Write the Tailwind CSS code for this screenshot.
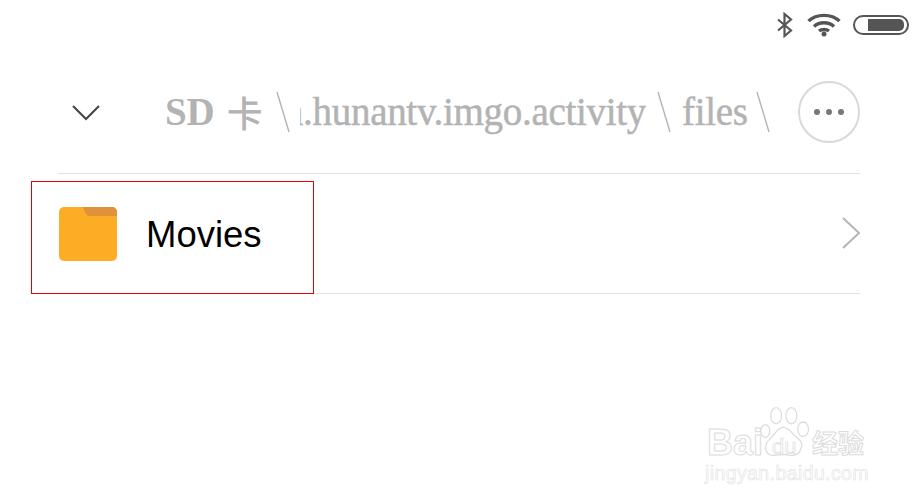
<!DOCTYPE html>
<html lang="zh">
<head>
<meta charset="utf-8">
<title>Movies</title>
<script src="https://cdn.jsdelivr.net/npm/@tailwindcss/browser@4"></script>
</head>
<body class="bg-white">
<div class="relative w-[920px] h-[504px] overflow-hidden bg-white font-['Liberation_Sans',sans-serif]">
  <!-- status bar -->
  <div class="h-[50px] flex items-start justify-end pt-[12px] pr-[11px]">
    <svg class="w-[18px] h-[26px] mr-[13px]" viewBox="0 0 18 26" fill="none" stroke="#555" stroke-width="2.2"><path d="M2 7.5 L15 18.5 L8.5 24 V2 L15 7.5 L2 18.5"/></svg>
    <svg class="w-[34px] h-[26px] mr-[12px]" viewBox="0 0 34 26" fill="none" stroke="#555" stroke-width="3.4"><path d="M1.500 9 C9.500 1.500 24.500 1.500 32.500 9"/><path d="M7 14.500 C12.500 9.500 21.500 9.500 27 14.500"/><path d="M12 19 C14.500 17 19.500 17 22 19"/><circle cx="17" cy="22" r="2.500" fill="#555" stroke="none"/></svg>
    <div class="mt-[3px] w-[56px] h-[20px] rounded-full border-2 border-[#555] pl-[13px] pr-[3px] py-[2px] flex">
      <div class="flex-1 bg-[#555] rounded-r-[5px]"></div>
    </div>
  </div>
  <!-- breadcrumb row -->
  <div class="ml-[58px] mr-[60px] h-[124px] border-b border-[#e3e3e3] flex items-center">
    <div class="w-[107px] pl-[14px] pt-[3px] shrink-0">
      <svg class="w-[28px] h-[18px] block" viewBox="0 0 28 18" fill="none" stroke="#444" stroke-width="2"><path d="M1 2 L14 15 L27 2"/></svg>
    </div>
    <div class="flex items-center text-[#b3b3b3] font-['Liberation_Serif','Noto_Sans_CJK_SC',serif] text-[39px] tracking-[-0.3px] h-[60px] pt-[1px]">
      <span class="w-[111px] shrink-0 flex items-center whitespace-nowrap font-bold">SD<span class="ml-[13px] font-['Noto_Sans_CJK_SC',serif] text-[35px] font-normal [-webkit-text-stroke:0.8px_#b3b3b3]">卡</span></span>
      <svg class="w-[14px] h-[42px] mr-[10px] shrink-0" viewBox="0 0 14 42" fill="none" stroke="#b3b3b3" stroke-width="1.4"><path d="M1 1 L13 41"/></svg>
      <div class="w-[346px] overflow-hidden flex justify-end shrink-0"><span class="whitespace-nowrap [-webkit-text-stroke:0.5px_#b3b3b3]">com.hunantv.imgo.activity</span></div>
      <svg class="w-[14px] h-[42px] ml-[11px] mr-[11px] shrink-0" viewBox="0 0 14 42" fill="none" stroke="#b3b3b3" stroke-width="1.4"><path d="M1 1 L13 41"/></svg>
      <span class="w-[62px] shrink-0 [-webkit-text-stroke:0.5px_#b3b3b3]">files</span>
      <svg class="w-[14px] h-[42px] ml-[12px] shrink-0" viewBox="0 0 14 42" fill="none" stroke="#b3b3b3" stroke-width="1.4"><path d="M1 1 L13 41"/></svg>
    </div>
    <div class="ml-auto mt-[1px] w-[62px] h-[62px] rounded-full border-2 border-[#d9d9d9] flex items-center justify-center gap-[6px] shrink-0">
      <span class="w-[6px] h-[6px] rounded-full bg-[#777]"></span>
      <span class="w-[6px] h-[6px] rounded-full bg-[#777]"></span>
      <span class="w-[6px] h-[6px] rounded-full bg-[#777]"></span>
    </div>
  </div>
  <!-- list row -->
  <div class="ml-[31px] mr-[60px] mt-[7px] h-[113px] flex items-stretch">
    <div class="w-[283px] h-[113px] border border-[#e60000] flex items-center pl-[27px] pb-[8px] shrink-0">
      <svg class="w-[58px] h-[54px] shrink-0" viewBox="0 0 58 54"><rect width="58" height="54" rx="5" fill="#fdac25"/><path d="M24 0 H53 A5 5 0 0 1 58 5 V9 H31 C28 9 27 7 26 5 Z" fill="#e0923a"/></svg>
      <span class="ml-[29px] mt-[4px] text-[36.5px] leading-none text-black">Movies</span>
    </div>
    <div class="flex-1 border-b border-[#e3e3e3] flex items-center justify-end pb-[8px]">
      <svg class="w-[18px] h-[32px]" viewBox="0 0 18 32" fill="none" stroke="#b5b5b5" stroke-width="2"><path d="M1 1 L17 16 L1 31"/></svg>
    </div>
  </div>
  <!-- watermark -->
  <div class="absolute left-[704px] top-[404px] w-[170px] h-[84px] text-white [-webkit-text-stroke:1px_#dcdcdc]">
    <span class="absolute left-[3px] top-[17px] text-[36px] leading-[44px] font-bold">Bai</span>
    <svg class="absolute left-[54px] top-0 w-[56px] h-[54px]" viewBox="0 0 62 60" fill="white" stroke="#dcdcdc" stroke-width="1.4"><ellipse cx="8" cy="30" rx="5" ry="7"/><ellipse cx="20" cy="13" rx="6" ry="9"/><ellipse cx="37" cy="13" rx="6" ry="9"/><ellipse cx="50" cy="28" rx="6" ry="8"/><path d="M28 26 C35 26 38 34 45 39 C52 45 47 58 37 57 C32 56 24 56 18 57 C8 58 5 46 13 39 C19 34 21 26 28 26 Z"/></svg>
    <span class="absolute left-[68px] top-[32px] text-[22px] leading-[22px] font-normal [-webkit-text-stroke:0.7px_#dcdcdc]">du</span>
    <span class="absolute left-[108px] top-[21px] text-[26px] leading-[34px] font-['Noto_Sans_CJK_SC',sans-serif] font-bold whitespace-nowrap">经验</span>
    <span class="absolute left-[1px] top-[58px] text-[19.500px] leading-[22px] tracking-[0.4px] whitespace-nowrap [-webkit-text-stroke:0.6px_#e2e2e2]">jingyan.baidu.com</span>
  </div>
</div>
</body>
</html>
